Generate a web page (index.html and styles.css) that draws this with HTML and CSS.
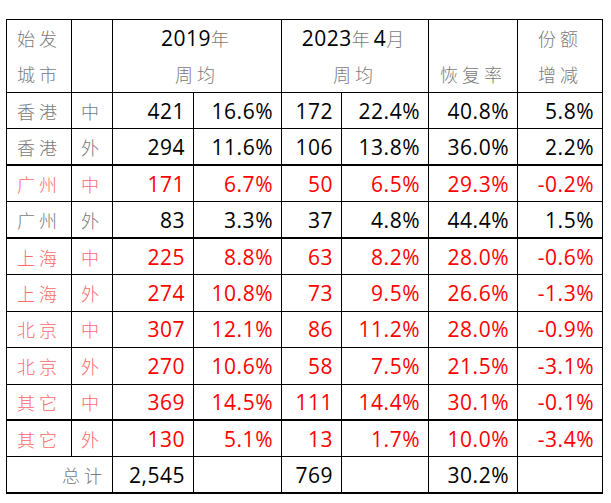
FILE: index.html
```html
<!DOCTYPE html>
<html lang="zh">
<head>
<meta charset="utf-8">
<title>周均航班恢复率</title>
<link rel="stylesheet" href="styles.css">
</head>
<body>
<table class="grid">
  <colgroup>
    <col class="w-city"><col class="w-io"><col class="w-n1"><col class="w-p1"><col class="w-n2"><col class="w-p2"><col class="w-rate"><col class="w-diff">
  </colgroup>
  <tr class="head">
    <td class="hc"><span class="line">始发</span><span class="line">城市</span></td>
    <td></td>
    <td colspan="2" class="hc"><span class="line"><span class="d">2019</span>年</span><span class="line">周均</span></td>
    <td colspan="2" class="hc"><span class="line"><span class="d">2023</span>年<span class="d">4</span>月</span><span class="line">周均</span></td>
    <td class="hc"><span class="line">&nbsp;</span><span class="line">恢复率</span></td>
    <td class="hc"><span class="line">份额</span><span class="line">增减</span></td>
  </tr>
  <tr class="row">
    <td class="cj">香港</td><td class="cj">中</td><td class="num">421</td><td class="num">16.6%</td><td class="num">172</td><td class="num">22.4%</td><td class="num">40.8%</td><td class="num">5.8%</td>
  </tr>
  <tr class="row sep">
    <td class="cj">香港</td><td class="cj">外</td><td class="num">294</td><td class="num">11.6%</td><td class="num">106</td><td class="num">13.8%</td><td class="num">36.0%</td><td class="num">2.2%</td>
  </tr>
  <tr class="row red">
    <td class="cj">广州</td><td class="cj">中</td><td class="num">171</td><td class="num">6.7%</td><td class="num">50</td><td class="num">6.5%</td><td class="num">29.3%</td><td class="num">-0.2%</td>
  </tr>
  <tr class="row sep">
    <td class="cj">广州</td><td class="cj">外</td><td class="num">83</td><td class="num">3.3%</td><td class="num">37</td><td class="num">4.8%</td><td class="num">44.4%</td><td class="num">1.5%</td>
  </tr>
  <tr class="row red">
    <td class="cj">上海</td><td class="cj">中</td><td class="num">225</td><td class="num">8.8%</td><td class="num">63</td><td class="num">8.2%</td><td class="num">28.0%</td><td class="num">-0.6%</td>
  </tr>
  <tr class="row red">
    <td class="cj">上海</td><td class="cj">外</td><td class="num">274</td><td class="num">10.8%</td><td class="num">73</td><td class="num">9.5%</td><td class="num">26.6%</td><td class="num">-1.3%</td>
  </tr>
  <tr class="row red">
    <td class="cj">北京</td><td class="cj">中</td><td class="num">307</td><td class="num">12.1%</td><td class="num">86</td><td class="num">11.2%</td><td class="num">28.0%</td><td class="num">-0.9%</td>
  </tr>
  <tr class="row red">
    <td class="cj">北京</td><td class="cj">外</td><td class="num">270</td><td class="num">10.6%</td><td class="num">58</td><td class="num">7.5%</td><td class="num">21.5%</td><td class="num">-3.1%</td>
  </tr>
  <tr class="row red sep">
    <td class="cj">其它</td><td class="cj">中</td><td class="num">369</td><td class="num">14.5%</td><td class="num">111</td><td class="num">14.4%</td><td class="num">30.1%</td><td class="num">-0.1%</td>
  </tr>
  <tr class="row red">
    <td class="cj">其它</td><td class="cj">外</td><td class="num">130</td><td class="num">5.1%</td><td class="num">13</td><td class="num">1.7%</td><td class="num">10.0%</td><td class="num">-3.4%</td>
  </tr>
  <tr class="row sep total">
    <td colspan="2" class="cj tot">总计</td><td class="num">2,545</td><td class="num"></td><td class="num">769</td><td class="num"></td><td class="num">30.2%</td><td class="num"></td>
  </tr>
</table>
</body>
</html>
```

FILE: styles.css
```css
html, body {
  margin: 0;
  padding: 0;
  background: #fff;
}

body {
  padding: 19px 0 0 6px;
}

.grid {
  border-collapse: collapse;
  table-layout: fixed;
  width: 597px;
  font-family: "Open Sans", "Noto Sans", "Noto Sans CJK SC", sans-serif;
  color: #000;
}

.w-city { width: 65px; }
.w-io { width: 41px; }
.w-n1 { width: 81px; }
.w-p1 { width: 88px; }
.w-n2 { width: 60px; }
.w-p2 { width: 87px; }
.w-rate { width: 89px; }
.w-diff { width: 85px; }

.grid td {
  border: 1px solid #000;
  padding: 0;
  white-space: nowrap;
  overflow: hidden;
}

.head {
  height: 72px;
}

.hc {
  text-align: center;
  vertical-align: top;
  font-family: "Noto Sans CJK SC", sans-serif;
  font-weight: 300;
  font-size: 18px;
  letter-spacing: 4px;
  color: #7a7a7a;
}

.hc .line {
  display: block;
  height: 36px;
  line-height: 36px;
}

.hc .d {
  font-family: "Open Sans", "Noto Sans", sans-serif;
  font-weight: 400;
  font-size: 21px;
  letter-spacing: 0.5px;
  color: #000;
}

.row {
  height: 36.45px;
}

.row td {
  line-height: 34px;
}

.cj {
  text-align: center;
  font-family: "Noto Sans CJK SC", sans-serif;
  font-weight: 300;
  font-size: 18px;
  letter-spacing: 4px;
  color: #7a7a7a;
}

.num {
  text-align: right;
  padding-right: 8px !important;
  font-size: 21px;
  letter-spacing: 0.5px;
}

.red .num {
  color: #ff0000;
}

.red .cj {
  color: #ff6a6a;
}

.sep td {
  border-bottom: 2px solid #000;
}

.total .tot {
  text-align: right;
  padding-right: 6px;
}
```
